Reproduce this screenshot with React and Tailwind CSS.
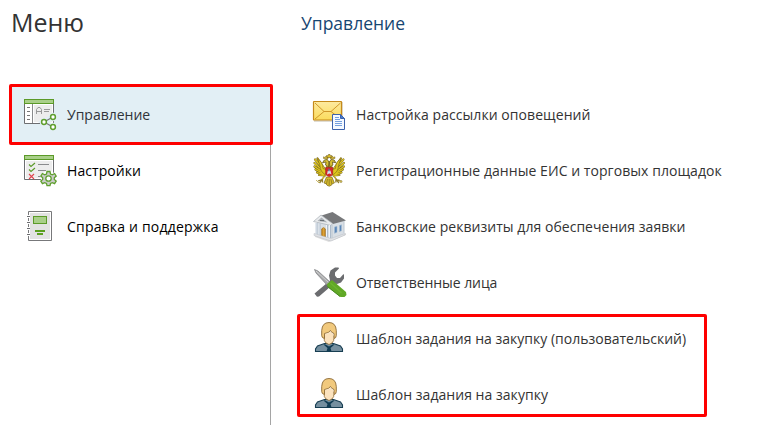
const Icon = ({ children }) => (
  <svg className="h-10 w-10 shrink-0" viewBox="5 5 40 40" fill="none">{children}</svg>
);

const WindowFrame = ({ children }) => (
  <>
    <path d="M9.500 13v20.500H38.500V13" fill="#fff" stroke="#6d6e71" />
    {children}
    <rect x="9.500" y="9.500" width="29" height="4" fill="#a9cf89" stroke="#5b9a28" />
  </>
);

const ManageIcon = () => (
  <Icon>
    <WindowFrame>
      <path d="M19 15h18v17H19z" fill="#ededed" />
      <path d="M17.500 14v19" stroke="#8a8b8d" />
      <path d="M12 17.500h3M12 21.500h3M12 25.500h3M12 29.500h3" stroke="#777" />
      <path d="M21.500 24v-4.500l1.500-2h2l1.500 2V24M21.500 21.500h5M29 19.500h6M29 21.500h5" stroke="#999" />
    </WindowFrame>
    <path d="M38 27L29 32L38 37" stroke="#e2eff5" strokeWidth="6" />
    <g fill="#e2eff5">
      <circle cx="38" cy="27" r="4.200" /><circle cx="29" cy="32" r="4.200" /><circle cx="38" cy="37" r="4.200" />
    </g>
    <path d="M38 27L29 32L38 37" stroke="#77787a" strokeWidth="1.200" />
    <g fill="#fff" stroke="#5f9f2e" strokeWidth="1.500">
      <circle cx="38" cy="27" r="2.400" /><circle cx="29" cy="32" r="2.400" /><circle cx="38" cy="37" r="2.400" />
    </g>
  </Icon>
);

const SettingsIcon = () => (
  <Icon>
    <WindowFrame>
      <path d="M11 15h26v17H11z" fill="#ededed" />
      <path d="M14 18.500l2 2 4-3.500M14 23.500l2 2 4-3.500" stroke="#5b9a28" strokeWidth="1.100" />
      <path d="M14 28l5 5M19 28l-5 5" stroke="#e0444d" strokeWidth="1.100" />
      <path d="M23 18.500h11M23 24.500h8M23 30.500h2" stroke="#8a8b8d" />
    </WindowFrame>
    <circle cx="33.500" cy="32.500" r="7.800" fill="#fff" />
    <path d="M32 25.500h3l.5 2.500 1.800.8 2.300-1.300 1.600 2.600-1.900 1.700v1.600l1.900 1.700-1.600 2.600-2.300-1.100-1.800.9-.5 2.100h-3l-.5-2.100-1.800-.9-2.300 1.100-1.600-2.600 1.900-1.700v-1.600l-1.900-1.700 1.600-2.600 2.300 1.300 1.800-.8z" fill="#cbcccb" stroke="#5f9f2e" strokeWidth="1.300" />
    <circle cx="33.500" cy="32.500" r="2.700" fill="#fff" stroke="#5f9f2e" strokeWidth="1.300" />
  </Icon>
);

const BookIcon = () => (
  <Icon>
    <path d="M13.500 9.500h23v29h-23z" fill="#fff" stroke="#77787a" />
    <path d="M15 11h20v26H15z" fill="#e2e2e2" />
    <path d="M13 13h2v3h-2zM13 19h2v3h-2zM13 25h2v3h-2zM13 31h2v3h-2z" fill="#fff" />
    <path d="M12 14.500h3M12 20.500h3M12 26.500h3M12 32.500h3" stroke="#6d6e71" />
    <rect x="18.500" y="14.500" width="13" height="7" fill="#a9cf89" stroke="#5b9a28" />
    <path d="M20 28h10v2H20zM22 31h6v2h-6z" fill="#5b9f1f" />
  </Icon>
);

const MailIcon = () => (
  <Icon>
    <path d="M9 12h29v20H9z" fill="#c9c5b8" opacity=".6" />
    <defs>
      <linearGradient id="mail" x1="0" y1="0" x2="0" y2="1">
        <stop stopColor="#fdeaa0" /><stop offset="1" stopColor="#fbdc5c" />
      </linearGradient>
    </defs>
    <rect x="8.500" y="11.500" width="28" height="18.500" rx=".5" fill="url(#mail)" stroke="#c58a1b" strokeWidth="1.200" />
    <path d="M10 13l9 8.500h7L35.500 13M19 21.500L10 29M26 21.500l9 7" stroke="#d0982a" />
    <path d="M27.500 24.500h8l4 4v11h-12z" fill="#f5f9ff" stroke="#3c62ac" />
    <path d="M35.500 24.500v4h4z" fill="#447bd0" stroke="#3c62ac" />
    <path d="M30 27.500h4M30 29.500h5M30 31.500h7M30 33.500h7M30 35.500h7" stroke="#75a0df" />
  </Icon>
);

const feathers = "M22 27L10 13.500M21 27.500L9.500 17M20.500 28L9.500 20.500M20 28.500L10.500 23.500M20 29L12 26.500M20 29.500L14 29M21 25L12.500 12.500";

const EagleHalf = () => (
  <>
    <path d={feathers} stroke="#7a681f" strokeWidth="2.200" strokeLinecap="round" />
    <path d={feathers} stroke="#e0c81c" strokeWidth="1.200" strokeLinecap="round" />
    <path d="M12.500 12.500q5 3 5.500 10l3 1 1-7 2-1v9l-4 4q-5-3-5-9z" fill="#dfc81f" stroke="#756119" strokeWidth=".6" />
    <path d="M23.500 21l-3-2 .5-3-3.500.8 1.800-2.800 3-.5 1.700 2.500z" fill="#d6bf33" stroke="#65571e" strokeWidth=".8" />
    <path d="M18.500 12.500v-1.700l1.500.7 1-1.500 1 1.500 1-.5v2z" fill="#d6b826" stroke="#75631d" strokeWidth=".5" />
    <path d="M20 29.500l-3 4-4 1.500M17 33.500l-2.500 3.500M17.500 33.500v3" stroke="#917e2b" strokeWidth="1.300" />
    <path d="M20 29.500l-3 3.500" stroke="#d9bf28" />
  </>
);

const EagleIcon = () => (
  <Icon>
    <path d="M21.500 31l-2.500 6 2 .7 1 1.500 2.200 1 2.200-1 1-1.500 2-.7-2.500-6z" fill="#d8bd2b" stroke="#77651f" strokeWidth=".7" />
    <path d="M22.500 33l-1 5M24.200 33v6M25.900 33l1 5" stroke="#6f5c21" strokeWidth=".6" />
    <EagleHalf />
    <g transform="translate(48.400 0) scale(-1 1)"><EagleHalf /></g>
    <path d="M22 11.500l-.5-2 1.500.4.400-1.400h1.600l.4 1.400 1.500-.4-.5 2z" fill="#dec023" stroke="#6e5b19" strokeWidth=".6" />
    <path d="M20.700 21.500h7v6.500l-1 1.500-2.500 1-2.500-1-1-1.500z" fill="#d5262b" stroke="#aa241a" strokeWidth=".7" />
    <path d="M22 28.500l.7-3.500 1.800-1 1 .7 1 3.800-1.700-1-1.300.3z" fill="#d9e2e9" />
    <path d="M23.200 22.700h1.500v2.600h-1.500z" fill="#5b7895" />
    <path d="M33.500 33l2.500 3" stroke="#c0ab48" strokeWidth=".8" />
    <circle cx="36" cy="35.500" r="1.100" fill="#d8c555" stroke="#82743e" strokeWidth=".5" />
    <path d="M11 34l3 3" stroke="#c0ab48" strokeWidth=".8" />
  </Icon>
);

const BankIcon = () => (
  <Icon>
    <path d="M10 33l14 5 17-7v2l-17 7-14-5z" fill="#dedede" />
    <path d="M12 20l13 2 14-4v14l-14 5-13-4z" fill="#d9dfe5" />
    <path d="M15 14l12.500-4L41 18.500l-13 3.500z" fill="#77787a" />
    <path d="M8.500 19.500L16 13l11.500 8.500-1.500 2z" fill="#e9ebed" stroke="#a8afb6" strokeWidth=".7" />
    <path d="M12.500 19l4-3.500 6 5z" fill="#abb1b7" />
    <path d="M15 18.500h4" stroke="#6c7278" />
    <path d="M11.500 21v11M14.500 21.500v12M22 23v12M25 23v13" stroke="#aebccb" strokeWidth="2" />
    <path d="M11 21v11M14 21.500v12M21.500 23v12M24.500 23v13" stroke="#f0f4f9" />
    <path d="M16.500 34.500V27q2-3 4 0v8.500z" fill="#c98a1e" stroke="#8e6a31" strokeWidth=".5" />
    <path d="M18.700 25.500v9" stroke="#e5b352" strokeWidth=".7" />
    <path d="M29.500 25l2.500-.7v6l-2.500 1zM34.500 23.500l2-.7v6l-2 .8z" fill="#5c87b8" stroke="#a6bed3" strokeWidth=".6" />
    <path d="M9 31.500L26 36.500l14-5V33l-14 6L9 33.500z" fill="#e2e4e7" stroke="#a8afb7" strokeWidth=".4" />
    <path d="M27 23v13M39 19v12" stroke="#bdc7d0" />
  </Icon>
);

const ToolsIcon = () => (
  <Icon>
    <path d="M9.500 35.500L25 22.500l-1-5 1.500-5L30 9.500h3.500l.5 1-4 4v3l2 2.500h3l3.500-4 .5 1v3.500l-3 4-4 1.500-3-.5L14 38.500l-2 .2z" fill="#6b6c6f" />
    <path d="M9.500 11.500l3.500 1.500 12 11-3 3L11 15z" fill="#a8a9ab" stroke="#7d7e81" strokeWidth=".7" />
    <path d="M11 13l12 11" stroke="#d1d1d1" />
    <path d="M22 26l5-4L41 34l.5 3-2 2h-4L22.500 29z" fill="#61a826" />
    <path d="M35 38.500L22.500 28.500" stroke="#478922" />
    <path d="M25.500 25l11 10" stroke="#6db52f" strokeWidth="1.200" />
  </Icon>
);

const PersonIcon = () => (
  <Icon>
    <path d="M10.500 37.500v-2.500l2-3 7-2.500h9l7 2.500 2 3v2.500z" fill="#758f9f" stroke="#173e52" strokeWidth="1.100" />
    <path d="M19.500 30l4.500 2.500 4.500-2.500.5 1-3.500 3 1 3.500h-5l1-3.500-3.500-3z" fill="#103c53" />
    <path d="M19.300 22h9.400v4.500q-1 3-4.700 4-3.700-1-4.700-4z" fill="#fbe2bd" stroke="#8c6a35" strokeWidth=".8" />
    <path d="M16.700 21.500v-5q.5-8 7.300-8t7.300 8v5q0 2.500-2.300 3v-5q-3-1-3.500-3-1.500 2.500-6 3v5q-2.800-.5-2.800-3z" fill="#f1c97d" stroke="#8c6a35" strokeWidth=".9" />
    <path d="M20 20q4-.5 5.300-2.500.9 1.500 3 2.500v5h-8.300z" fill="#fbe2bd" />
  </Icon>
);

const menu = [
  { icon: ManageIcon, label: "Управление", tone: "bg-[#e2eff5] text-[#30343a]", tracking: "tracking-normal" },
  { icon: SettingsIcon, label: "Настройки", tone: "text-black", tracking: "tracking-[0.06px]" },
  { icon: BookIcon, label: "Справка и поддержка", tone: "text-black", tracking: "tracking-[0.19px]" },
];

const links = [
  { icon: MailIcon, label: "Настройка рассылки оповещений", tracking: "tracking-[0.06px]" },
  { icon: EagleIcon, label: "Регистрационные данные ЕИС и торговых площадок", tracking: "tracking-[0.06px]" },
  { icon: BankIcon, label: "Банковские реквизиты для обеспечения заявки", tracking: "tracking-[0.04px]" },
  { icon: ToolsIcon, label: "Ответственные лица", tracking: "tracking-[-0.07px]" },
  { icon: PersonIcon, label: "Шаблон задания на закупку (пользовательский)", tracking: "tracking-[0.01px]" },
  { icon: PersonIcon, label: "Шаблон задания на закупку", tracking: "tracking-[0.04px]" },
];

export default function App() {
  return (
    <main className="relative flex h-[425px] w-[769px] overflow-hidden bg-white font-['Open_Sans','Noto_Sans',sans-serif] text-[14px] leading-5">
      <aside className="flex w-[271px] flex-col">
        <h1 className="h-[84px] pt-[5px] pl-[11px] text-[25px] leading-[34px] font-[370] text-[#333]">Меню</h1>
        <nav className="grow border-r border-[#a5a5a5] pt-[3px] pl-3">
          {menu.map(({ icon: Glyph, label, tone, tracking }) => (
            <a key={label} className={`flex h-14 items-center gap-[7px] pl-2 whitespace-nowrap ${tone}`}>
              <Glyph />
              <span className={`pb-px ${tracking}`}>{label}</span>
            </a>
          ))}
        </nav>
      </aside>
      <section className="grow pl-[30px]">
        <h2 className="h-[87px] pt-[11px] text-[17.5px] leading-6 text-[#164672]">Управление</h2>
        <ul className="pl-[9px]">
          {links.map(({ icon: Glyph, label, tracking }) => (
            <li key={label} className="flex h-14 items-center gap-[6px] whitespace-nowrap text-[#333]">
              <Glyph />
              <span className={`pb-px ${tracking}`}>{label}</span>
            </li>
          ))}
        </ul>
      </section>
      <div className="absolute top-[84px] left-[9px] h-[61px] w-[264px] rounded-[2px] border-3 border-[#fe0000]" />
      <div className="absolute top-[314px] left-[297px] h-[103px] w-[410px] rounded-[2px] border-3 border-[#fe0000]" />
    </main>
  );
}
